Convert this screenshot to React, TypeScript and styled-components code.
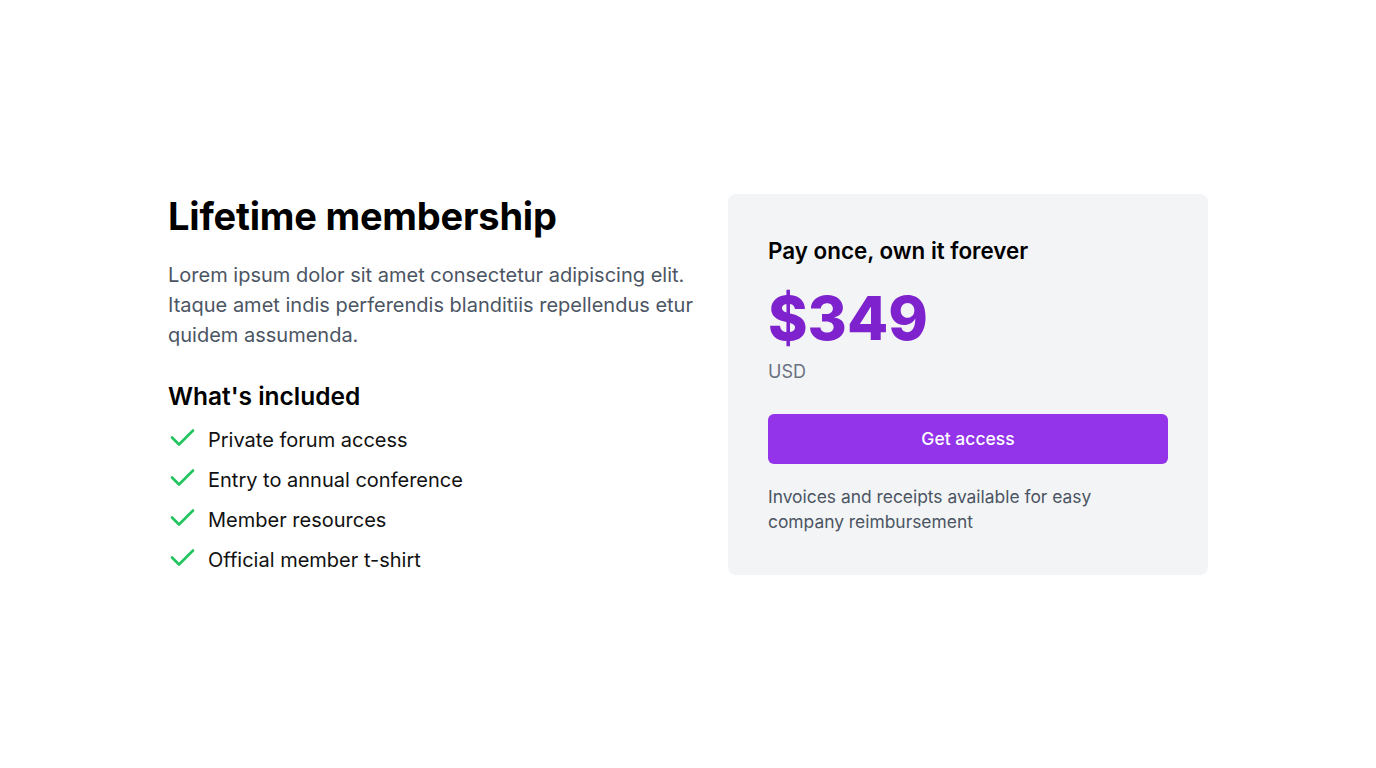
import React from "react";
import styled, { createGlobalStyle } from "styled-components";

const Global = createGlobalStyle`
  html, body { margin: 0; padding: 0; background: #ffffff; }
  body { font-family: Inter, "Noto Sans", sans-serif; -webkit-font-smoothing: antialiased; }
  * { box-sizing: border-box; }
`;

const Page = styled.main`
  min-height: 768px;
  display: flex;
  align-items: center;
  justify-content: center;
`;

const Section = styled.section`
  width: 1040px;
  display: grid;
  grid-template-columns: 560px 480px;
  align-items: start;
`;

const Details = styled.div`
  padding-right: 32px;
  display: flex;
  flex-direction: column;
`;

const Title = styled.h2`
  margin: 0;
  font-size: 38px;
  line-height: 44px;
  font-weight: 700;
  color: #000;
  letter-spacing: -0.2px;
`;

const Lead = styled.p`
  margin: 22px 0 0;
  font-size: 20px;
  line-height: 30px;
  color: #4b5563;
`;

const SubTitle = styled.h3`
  margin: 30px 0 0;
  font-size: 24.5px;
  line-height: 32px;
  font-weight: 600;
  color: #000;
`;

const List = styled.ul`
  list-style: none;
  margin: 14px 0 0;
  padding: 0;
  display: flex;
  flex-direction: column;
  gap: 12px;
`;

const Item = styled.li`
  display: flex;
  align-items: center;
  gap: 8px;
  font-size: 20px;
  line-height: 28px;
  color: #111;
`;

const Check = styled.svg`
  width: 32px;
  height: 24px;
  flex: none;
  color: #22c55e;
`;

const Card = styled.div`
  background: #f3f4f6;
  border-radius: 8px;
  padding: 41px 40px 41px;
  display: flex;
  flex-direction: column;
`;

const CardTitle = styled.p`
  margin: 0;
  font-size: 22.4px;
  line-height: 32px;
  font-weight: 600;
  color: #000;
`;

const Price = styled.p`
  margin: 15px 0 0;
  font-size: 60px;
  line-height: 72px;
  font-weight: 800;
  color: #7e22ce;
`;

const Currency = styled.p`
  margin: 6px 0 0;
  font-size: 18px;
  line-height: 24px;
  color: #6b7280;
`;

const Button = styled.button`
  margin-top: 30px;
  height: 50px;
  width: 100%;
  border: 0;
  border-radius: 6px;
  background: #9333ea;
  color: #fff;
  font-family: inherit;
  font-size: 17.5px;
  font-weight: 500;
  cursor: pointer;
`;

const Note = styled.p`
  margin: 20px 0 0;
  font-size: 17.4px;
  line-height: 25px;
  color: #4b5563;
  max-width: 340px;
`;

const features = [
  "Private forum access",
  "Entry to annual conference",
  "Member resources",
  "Official member t-shirt",
];

export default function App() {
  return (
    <>
      <Global />
      <Page>
        <Section>
          <Details>
            <Title>Lifetime membership</Title>
            <Lead>
              Lorem ipsum dolor sit amet consectetur adipiscing elit. Itaque amet indis
              perferendis blanditiis repellendus etur quidem assumenda.
            </Lead>
            <SubTitle>What's included</SubTitle>
            <List>
              {features.map((f) => (
                <Item key={f}>
                  <Check viewBox="0 0 32 24" fill="none" stroke="currentColor" strokeWidth={2.6}>
                    <path d="M4 9.5l7 7L25 2.5" strokeLinecap="round" strokeLinejoin="round" />
                  </Check>
                  {f}
                </Item>
              ))}
            </List>
          </Details>
          <Card>
            <CardTitle>Pay once, own it forever</CardTitle>
            <Price>$349</Price>
            <Currency>USD</Currency>
            <Button>Get access</Button>
            <Note>Invoices and receipts available for easy company reimbursement</Note>
          </Card>
        </Section>
      </Page>
    </>
  );
}
